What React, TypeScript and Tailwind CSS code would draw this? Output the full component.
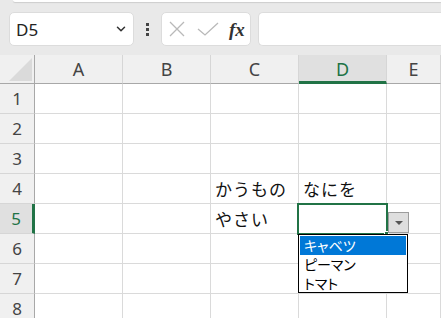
import { ChevronDown } from "lucide-react";

const cols = ["A", "B", "C", "D", "E"];
const rows = [1, 2, 3, 4, 5, 6, 7, 8];

const cellText: Record<string, string> = {
  C4: "かうもの",
  D4: "なにを",
  C5: "やさい",
};

const jp = "font-['Yu_Gothic','Noto_Sans_CJK_JP',sans-serif]";

export default function App() {
  return (
    <div className="relative w-[441px] h-[318px] overflow-hidden bg-[#e9e9e9] font-['Noto_Sans',sans-serif] text-[#222]">
      {/* top ribbon edge */}
      <div className="h-[2px] ml-[13px] bg-white rounded-bl-[4px] shadow-[0_1px_1px_rgba(0,0,0,0.12)]" />

      {/* formula bar */}
      <div className="flex items-center h-[34px] mt-[10px] pl-[9px]">
        <div className="flex items-center w-[125px] h-[34px] bg-white rounded-[5px] border border-[#dcdcdc] pl-[6px] pr-[5px]">
          <span className="flex-1 text-[17px] leading-none">D5</span>
          <ChevronDown size={14} strokeWidth={2.6} className="text-[#333]" />
        </div>
        <div className="flex flex-col items-center justify-center gap-[2px] w-[27px]">
          <span className="w-[3px] h-[3px] bg-[#444]" />
          <span className="w-[3px] h-[3px] bg-[#444]" />
          <span className="w-[3px] h-[3px] bg-[#444]" />
        </div>
        <div className="flex items-center w-[90px] h-[34px] bg-white rounded-[5px] border border-[#dcdcdc]">
          <svg width="16" height="16" viewBox="0 0 16 16" className="ml-[7px]">
            <path d="M1 1 L15 15 M15 1 L1 15" stroke="#b9b9b9" strokeWidth="1.3" fill="none" />
          </svg>
          <svg width="22" height="14" viewBox="0 0 22 14" className="ml-[12px]">
            <path d="M1 7 L8 13 L21 1" stroke="#b9b9b9" strokeWidth="1.3" fill="none" />
          </svg>
          <span className="ml-[10px] text-[19px] italic font-['Liberation_Serif',serif] font-bold text-[#333] leading-none">
            fx
          </span>
        </div>
        <div className="ml-[7px] flex-1 h-[34px] bg-white rounded-l-[5px] border border-r-0 border-[#dcdcdc]" />
      </div>

      {/* sheet grid */}
      <div className="mt-[9px] bg-white grid grid-cols-[35px_88px_88px_88px_88px_1fr] grid-rows-[29px_repeat(8,30px)]">
        {/* corner */}
        <div className="relative bg-[#f0f0f0] border-r border-b border-[#a8a8a8]">
          <svg width="23" height="23" viewBox="0 0 23 23" className="absolute left-[9px] top-[3px]">
            <path d="M23 0 L23 23 L0 23 Z" fill="#dadada" />
          </svg>
        </div>
        {cols.map((c) => (
          <div
            key={c}
            className={
              c === "D"
                ? "flex items-center justify-center bg-[#e0e0e0] border-r border-[#d6d6d6] border-b-[3px] border-b-[#217346] text-[#217346] text-[18px] pt-[2px]"
                : "flex items-center justify-center bg-[#f0f0f0] border-r border-b border-r-[#d6d6d6] border-b-[#a8a8a8] text-[#444] text-[18px]"
            }
          >
            {c}
          </div>
        ))}
        {rows.map((r) => (
          <Row key={r} r={r} />
        ))}
      </div>

      {/* selection D5 */}
      <div className="absolute left-[297px] top-[203px] w-[91px] h-[32px] border-2 border-[#217346]" />
      <div className="absolute left-[384px] top-[231px] w-[5px] h-[5px] bg-[#217346] border border-white" />

      {/* dropdown button */}
      <div className="absolute left-[388px] top-[212px] w-[21px] h-[21px] bg-[#dedede] border border-[#9c9c9c] flex items-center justify-center">
        <svg width="8" height="4" viewBox="0 0 8 4">
          <path d="M0 0 L8 0 L4 4 Z" fill="#555" />
        </svg>
      </div>

      {/* dropdown list */}
      <div
        className={`absolute left-[298px] top-[234px] w-[110px] h-[59px] bg-white border border-black pt-[1px] px-[1px] text-[14px] leading-[19px] ${jp} [font-feature-settings:'palt']`}
      >
        <div className="h-[19px] bg-[#0078d7] text-white pl-[4px]">キャベツ</div>
        <div className="h-[19px] text-black pl-[4px]">ピーマン</div>
        <div className="h-[19px] text-black pl-[4px]">トマト</div>
      </div>
    </div>
  );
}

function Row({ r }: { r: number }) {
  const active = r === 5;
  return (
    <>
      <div
        className={
          active
            ? "flex items-center justify-center bg-[#e0e0e0] border-r-[3px] border-r-[#217346] border-b border-b-[#d6d6d6] text-[#217346] text-[17px]"
            : "flex items-center justify-center bg-[#f0f0f0] border-r border-b border-r-[#a8a8a8] border-b-[#d6d6d6] text-[#444] text-[17px]"
        }
      >
        {r}
      </div>
      {cols.map((c) => (
        <div
          key={c}
          className={`flex items-center pl-[4px] border-r border-b border-[#dadada] text-[17px] tracking-[1px] text-[#111] whitespace-nowrap ${jp}`}
        >
          {cellText[c + r] ?? ""}
        </div>
      ))}
    </>
  );
}
